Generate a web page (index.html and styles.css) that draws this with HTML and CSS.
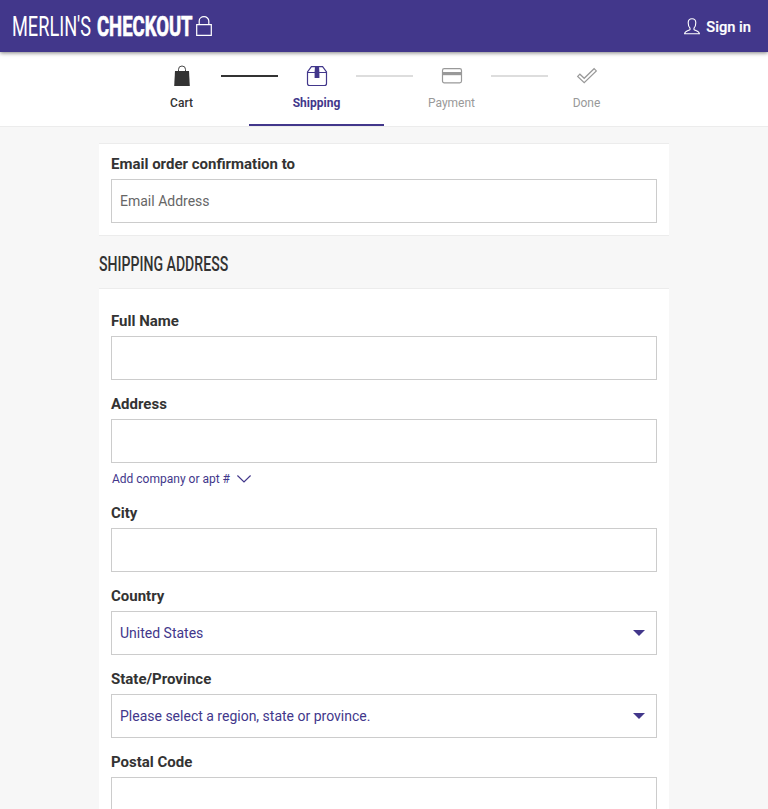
FILE: index.html
```html
<!DOCTYPE html>
<html lang="en">
<head>
<meta charset="utf-8">
<title>Merlin's Checkout</title>
<link rel="stylesheet" href="styles.css">
</head>
<body>
<header class="header">
  <div class="brand">
    <svg class="wordmark" width="182" height="32" viewBox="0 0 182 32">
      <text class="word-light" transform="scale(.7 1)" x="0" y="26" textLength="113" lengthAdjust="spacingAndGlyphs">MERLIN'S</text>
      <text class="word-bold" transform="translate(85 0) scale(.65 1)" x="0" y="26" textLength="147" lengthAdjust="spacingAndGlyphs">CHECKOUT</text>
    </svg>
    <svg class="lock" width="16" height="20" viewBox="0 0 16 20"><path d="M.7 8.7h14.6v10.6H.7zM3.2 8.5V5a4.8 4.3 0 0 1 9.6 0v3.5"/></svg>
  </div>
  <a class="signin">
    <svg width="16" height="17" viewBox="0 0 16 17"><path d="M6 10.2C4.8 9 4.2 7 4.2 4.7 4.2 2.2 5.7.7 8 .7s3.8 1.5 3.8 4c0 2.3-.6 4.3-1.8 5.5v1.4c1 1.1 5.4 1.1 5.4 4.2H.6c0-3.1 4.4-3.1 5.4-4.2z"/></svg>
    <span>Sign in</span>
  </a>
</header>
<nav class="steps">
  <div class="step done">
    <svg width="22" height="22" viewBox="0 0 22 22"><path d="M4 6h14l.8 15H3.2z" fill="currentColor"/><path d="M7.5 8V4.4a3.5 3.4 0 0 1 7 0V8" fill="none" stroke="currentColor" stroke-width=".9"/></svg>
    <span>Cart</span>
  </div>
  <div class="step active">
    <svg width="22" height="22" viewBox="0 0 22 22"><path d="M5.4 1.6h11.2L20.5 7v11.5q0 2-2 2h-15q-2 0-2-2V7zM1.5 7.5h19" fill="none" stroke="currentColor" stroke-width="1.2"/><path d="M9 1.5h4L13.4 7v6H8.6V7z" fill="currentColor"/></svg>
    <span>Shipping</span>
  </div>
  <div class="step">
    <svg width="22" height="22" viewBox="0 0 22 22"><rect x="1.5" y="3.7" width="19" height="14.2" rx="1.8" fill="none" stroke="currentColor" stroke-width="1.2"/><path d="M1.5 7h19v3.2h-19z" fill="currentColor"/></svg>
    <span>Payment</span>
  </div>
  <div class="step">
    <svg width="22" height="22" viewBox="0 0 22 22"><path d="M1.7 11.4l2.2-2.2 4.3 4.1 9.9-9.6 2.2 2.2L8.2 17.7z" fill="none" stroke="currentColor" stroke-width="1.2"/></svg>
    <span>Done</span>
  </div>
</nav>
<main class="content">
  <section class="card email">
    <label class="field"><span>Email order confirmation to</span><input type="text" placeholder="Email Address"></label>
  </section>
  <h2 class="heading"><svg width="132" height="28" viewBox="0 0 132 28"><text transform="scale(.73 1)" x="0" y="21" textLength="177" lengthAdjust="spacingAndGlyphs">SHIPPING ADDRESS</text></svg></h2>
  <section class="card address">
    <label class="field"><span>Full Name</span><input type="text"></label>
    <label class="field"><span>Address</span><input type="text"></label>
    <a class="more">Add company or apt #<svg width="14" height="8" viewBox="0 0 14 8"><path d="M.4.5L7 7 13.6.5"/></svg></a>
    <label class="field"><span>City</span><input type="text"></label>
    <label class="field"><span>Country</span>
      <div class="select">United States<i class="caret"></i></div></label>
    <label class="field"><span>State/Province</span>
      <div class="select">Please select a region, state or province.<i class="caret"></i></div></label>
    <label class="field"><span>Postal Code</span><input type="text"></label>
  </section>
</main>
</body>
</html>
```
FILE: styles.css
```css
* { box-sizing: border-box; }
html { overflow: hidden; }
body { margin: 0; height: 809px; overflow: hidden; background: #f7f7f7; color: #333; font-family: Roboto, sans-serif; }
.header { position: relative; height: 52px; padding: 0 17px 0 12px; display: flex; align-items: center; justify-content: space-between; background: #42378b; color: #fff; box-shadow: 0 1px 4px rgba(0,0,0,.5); }
.brand { display: flex; align-items: center; gap: 2px; }
.wordmark { display: block; overflow: visible; fill: #fff; font-size: 28px; }
.word-light { font-weight: 400; }
.word-bold { font-weight: 700; stroke: #fff; stroke-width: .7; }
.lock { fill: none; stroke: #fff; stroke-width: 1.2; }
.signin { display: flex; align-items: center; gap: 6px; font-size: 14.7px; font-weight: 500; line-height: 18px; padding-top: 1px; -webkit-text-stroke: .2px #fff; }
.signin svg { fill: none; stroke: #fff; stroke-width: 1.1; }
.steps { height: 75px; padding: 0 114px; display: flex; background: #fff; border-bottom: 1px solid #ececec; }
.step { position: relative; width: 135px; height: 74px; padding-top: 13px; display: flex; flex-direction: column; align-items: center; color: #999; font-size: 12px; line-height: 16px; }
.step svg { display: block; margin-bottom: 8px; }
.step:not(:last-child)::after { content: ""; position: absolute; left: 107px; top: 23px; width: 57px; height: 2px; background: #ddd; }
.step.done { color: #333; font-weight: 500; }
.step.done::after { background: #333 !important; }
.step.active { color: #42378b; font-weight: 700; border-bottom: 2px solid #42378b; }
.content { width: 570px; margin: 16px auto 0; }
.card { background: #fff; border-top: 1px solid #ececec; border-bottom: 1px solid #ececec; padding: 0 12px; }
.email { height: 93px; padding-top: 11px; }
.field { display: block; height: 83px; }
.field > span { display: block; height: 24px; font-size: 15px; line-height: 18px; font-weight: 700; }
.field input, .select { display: block; width: 100%; height: 44px; padding: 0 8px; border: 1px solid #ccc; border-radius: 0; background: #fff; font: 14px/42px Roboto, sans-serif; }
.field input::placeholder { color: #666; opacity: 1; }
.select { display: flex; justify-content: space-between; align-items: center; padding-right: 11px; color: #42378b; }
.caret { border: 6px solid transparent; border-top-color: #42378b; border-bottom: 0; }
.heading { margin: 0; height: 52px; padding-top: 14px; }
.heading svg { display: block; overflow: visible; fill: #333; font-size: 20px; font-weight: 500; }
.address { padding-top: 23px; }
.more { display: flex; align-items: center; gap: 7px; height: 26px; margin-left: 1px; margin-top: -15px; margin-bottom: 15px; padding-top: 5px; font-size: 12px; line-height: 16px; color: #42378b; }
.more svg { fill: none; stroke: #42378b; stroke-width: 1.2; }
```
